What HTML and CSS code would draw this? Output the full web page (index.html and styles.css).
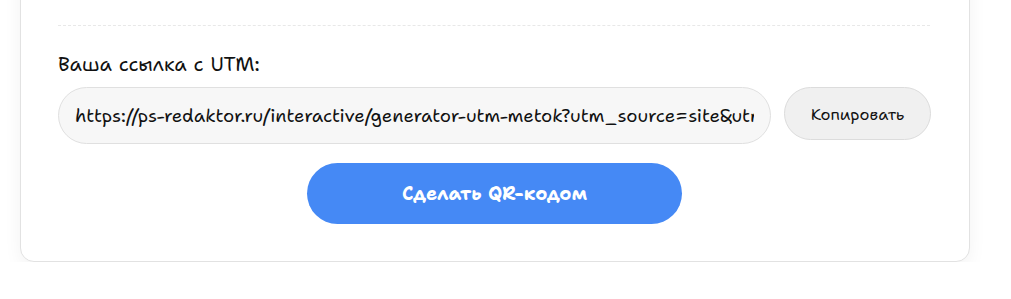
FILE: index.html
```html
<!DOCTYPE html>
<html lang="ru">
<head>
<meta charset="utf-8">
<title>UTM</title>
<link rel="stylesheet" href="styles.css">
</head>
<body>
<div class="card">
  <div class="divider"></div>
  <div class="result">
    <label class="label" for="link">Ваша ссылка с UTM:</label>
    <div class="row">
      <input id="link" class="link" type="text" readonly value="https://ps-redaktor.ru/interactive/generator-utm-metok?utm_source=site&amp;utm_medium=banner">
      <button class="copy" type="button">Копировать</button>
    </div>
    <div class="actions">
      <button class="qr" type="button">Сделать QR-кодом</button>
    </div>
  </div>
</div>
</body>
</html>
```
FILE: styles.css
```css
html, body {
  margin: 0;
  padding: 0;
  background: #ffffff;
}
body {
  font-family: "Shantell Sans", "Comic Relief", "Open Sans", sans-serif;
  color: #111111;
}
.card {
  box-sizing: border-box;
  width: 950px;
  margin: -41px 0 0 20px;
  padding: 65px 38px 37px 37px;
  background: #ffffff;
  border: 1px solid #e2e2e2;
  border-radius: 14px;
  box-shadow: 0 6px 18px rgba(0, 0, 0, 0.05);
}
.divider {
  border-top: 1px dashed #e8e8e8;
  margin-right: 1px;
}
.result {
  padding-top: 26px;
}
.label {
  display: block;
  font-size: 20px;
  line-height: 24px;
  margin-bottom: 11px;
}
.row {
  display: flex;
  gap: 13px;
  align-items: flex-start;
}
.link {
  flex: 1;
  min-width: 0;
  box-sizing: border-box;
  height: 57px;
  padding: 0 16px;
  font-family: inherit;
  font-size: 18.5px;
  color: #111111;
  background: #f7f7f7;
  border: 1px solid #e0e0e0;
  border-radius: 29px;
  outline: none;
}
.copy {
  box-sizing: border-box;
  width: 147px;
  height: 53px;
  font-family: inherit;
  font-size: 16.4px;
  color: #111111;
  background: #f0f0f0;
  border: 1px solid #dcdcdc;
  border-radius: 27px;
}
.actions {
  display: flex;
  justify-content: center;
  padding-top: 19px;
}
.qr {
  width: 375px;
  height: 61px;
  font-family: inherit;
  font-size: 18.7px;
  font-weight: 700;
  color: #ffffff;
  background: #4589f5;
  border: none;
  border-radius: 31px;
}
```
